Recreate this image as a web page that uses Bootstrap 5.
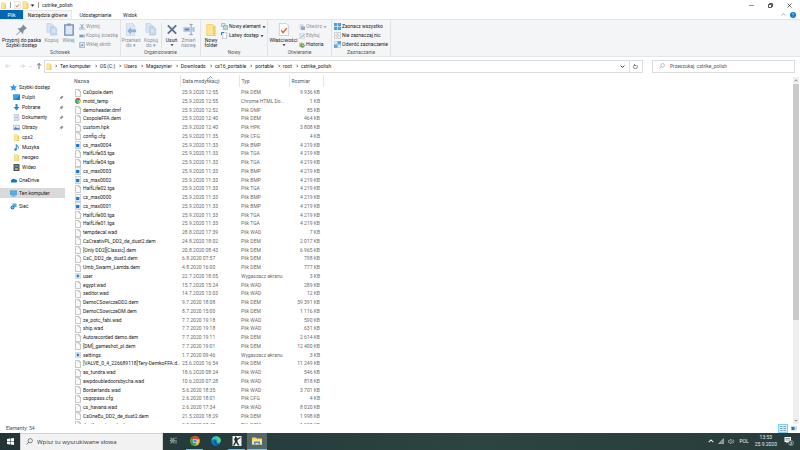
<!DOCTYPE html>
<html lang="pl">
<head>
<meta charset="utf-8">
<meta name="viewport" content="width=device-width, initial-scale=1">
<title>cstrike_polish</title>
<link href="https://cdn.jsdelivr.net/npm/bootstrap@5.3.0/dist/css/bootstrap.min.css" rel="stylesheet">
<style>
  body { font: 5px/1 Roboto, "Open Sans", sans-serif; color: #1a1a1a; background: #fff; }
  button, input { font: inherit; color: inherit; border: 0; padding: 0; background: none; }
  a { color: inherit; text-decoration: none; }
  svg { display: block; flex: none; }
  .i5 { width: 5px; height: 5px; }
  .i6 { width: 6px; height: 6px; }
  .i7 { width: 7px; height: 7px; }
  .file-icon { width: 6px; height: 8px; }
  .i10 { width: 10px; height: 10px; }
  .i12 { width: 12px; height: 13px; }
  .titlebar { height: 10px; padding: 0 8px 0 0; gap: 1px; }
  .window-btns { gap: 14px; }
  .bar-sep { width: 1px; height: 6px; background: #999; margin: 0 2px; }
  .tabs { height: 9px; }
  .tabs a { height: 9px; line-height: 10px; text-align: center; }
  .tabs .file-tab { width: 23px; background: #0067b3; color: #fff; }
  .tabs .home-tab { width: 49px; background: #f5f6f7; border: 1px solid #e6e7e8; border-bottom: 0; line-height: 9px; }
  .tabs .share-tab { width: 47px; }
  .tabs .view-tab { width: 22px; }
  .ribbon { height: 39px; background: #f4f5f7; border-top: 1px solid #e4e5e6; border-bottom: 1px solid #e4e5e6; }
  .group { border-right: 1px solid #e2e3e4; padding-bottom: 1px; }
  .group-label { color: #555; line-height: 6px; text-align: center; }
  .w-clip { width: 121px; } .w-org { width: 80px; } .w-new { width: 67px; } .w-open { width: 64px; } .w-sel { width: 59px; }
  .big { display: flex; flex-direction: column; align-items: center; padding-top: 3px; line-height: 5px; width: 17px; white-space: nowrap; }
  .big svg { margin-bottom: 2px; }
  .big.wide { width: 43px; } .big.mid { width: 20px; } .big.prop { width: 31px; }
  .off { color: #8b919a; }
  .stack { display: flex; flex-direction: column; padding: 2px 0 0 2px; }
  .stack button { display: flex; align-items: center; gap: 1px; height: 9px; white-space: nowrap; }
  .split { width: 1px; height: 26px; margin: 3px 1px 0 0; background: #e0e2e4; }
  .addressbar { height: 18px; padding: 2px 5px 2px 0; gap: 5px; }
  .nav-arrows { width: 39px; padding-left: 5px; color: #555; }
  .path-box, .search-box { border: 1px solid #dcdcdc; height: 13px; }
  .path-box { flex: 1; padding-left: 1px; }
  .crumb { display: flex; align-items: center; }
  .crumb svg { margin: 0 2px 0 3px; color: #444; }
  .crumb svg:first-child { margin-left: 2px; }
  .refresh { width: 13px; border-left: 1px solid #e2e2e2; height: 11px; }
  .search-box { width: 18%; padding-left: 6px; gap: 5px; }
  .search-box input { color: #555; outline: 0; min-width: 0; flex: 1; }
  .search-box input::placeholder, .task-search input::placeholder { color: inherit; opacity: 1; }
  .side { width: 65px; padding-top: 7px; }
  .side a { display: flex; align-items: center; height: 10px; gap: 2px; padding-left: 13px; padding-right: 1px; }
  .side a.root { padding-left: 10px; }
  .side a.gap-before { margin-top: 3px; }
  .side a.current { background: #d9d9d9; }
  .side .pin { margin-left: auto; }
  .files { width: 253px; margin-left: 5px; table-layout: fixed; border-collapse: collapse; line-height: 1.75; }
  .files th { font-weight: 400; color: #45566b; height: 12px; padding: 0 0 1px 2px; border-right: 1px solid #e5e5e5; position: relative; line-height: 10px; }
  .files td { padding: 0 0 0 2px; white-space: nowrap; overflow: hidden; color: #6a6a6a; }
  .files td.size { text-align: right; padding-right: 3px; }
  .files td.label { color: #1a1a1a; padding-left: 5px; }
  .files td.label span { display: flex; gap: 2px; align-items: center; }
  .files .spacer td { height: 1px; line-height: 1px; }
  .sortmark { position: absolute; left: 27px; top: 0; }
  .scroller { width: 6px; margin: 2px 1px 0 0; background: #efefef; color: #555; }
  .scroller .thumb { flex: 0 0 68%; background: #cacaca; }
  .scroller .ends { height: 7px; }
  .status { height: 9px; padding: 0 3px 0 6px; color: #34527a; }
  .status .on { background: #cdeefd; outline: 1px solid #7fd0f5; }
  .taskbar { height: 17px; background: linear-gradient(90deg, #223436, #2c4442 60%, #293c3c); color: #e8ecec; }
  .start { width: 20px; }
  .task-search { width: 143px; background: #f2f2f2; color: #333; font: 6px/1 "Open Sans", sans-serif; gap: 4px; padding-left: 5px; border: 1px solid #cfd3d3; border-bottom: 0; }
  .task-search input { flex: 1; outline: 0; min-width: 0; }
  .apps { padding-left: 2px; }
  .app { width: 17px; margin-right: 4px; height: 17px; border-bottom: 1px solid transparent; display: flex; align-items: center; justify-content: center; }
  .app.open { border-color: #76b9ed; }
  .app.front { background: #56686a; width: 20px; margin-left: -2px; }
  .tray { gap: 4px; padding-right: 6px; }
  .clock { line-height: 7px; text-align: center; margin: 0 3px 0 2px; }
</style>
<script src="https://cdn.jsdelivr.net/npm/bootstrap@5.3.0/dist/js/bootstrap.bundle.min.js"></script>
</head>
<body class="vh-100 d-flex flex-column overflow-hidden">

<svg width="0" height="0" class="position-absolute" aria-hidden="true">
  <symbol id="folder" viewBox="0 0 12 14"><path d="M1 1h7l1 2h2v11H1z" fill="#f6cf62"/><path d="M2 2h6v11H2z" fill="#ffe59a"/></symbol>
  <symbol id="page" viewBox="0 0 11 14"><path d="M1 .5h6l3 3v10H1z" fill="#fafafa" stroke="#999"/><path d="M7 .5v3h3" fill="none" stroke="#999"/></symbol>
  <symbol id="image" viewBox="0 0 11 14"><path d="M.5.500h10v13H.5z" fill="#f7fbff" stroke="#9aa7b5"/><rect x="2" y="5" width="6" height="6" fill="#1c77cf"/></symbol>
  <symbol id="saver" viewBox="0 0 14 12"><path d="M.5.5h13v11H.5z" fill="#eef3f8" stroke="#9aa2aa"/><rect x="4" y="3" width="5" height="6" fill="#1878d8"/><path d="M11 3v6" stroke="#9aa2aa"/></symbol>
  <symbol id="chrome" viewBox="0 0 24 24"><circle cx="12" cy="12" r="11.500" fill="#fbc116"/><path d="M12 12 2 6.200A11.500 11.500 0 0 1 22 6.200z" fill="#e33b2e"/><path d="M12 12 2 6.200A11.500 11.500 0 0 0 11.500 23.500L17 15z" fill="#2da14c"/><circle cx="12" cy="12" r="5.500" fill="#fff"/><circle cx="12" cy="12" r="4.300" fill="#4285f4"/></symbol>
  <symbol id="pin" viewBox="0 0 12 12"><path d="m7 1 4 4-1.500.5-2 2-.5 3L1.500 5l3-.5 2-2z" fill="#7e8d99"/><path d="m4.500 7.500-4 4" stroke="#7e8d99"/></symbol>
  <symbol id="chev" viewBox="0 0 8 8"><path d="m3 1.500 2.500 2.500L3 6.500" fill="none" stroke="currentColor" stroke-width="1.500"/></symbol>
  <symbol id="up" viewBox="0 0 8 8"><path d="m1 5.500 3-3 3 3" fill="none" stroke="currentColor" stroke-width="1.400"/></symbol>
  <symbol id="down" viewBox="0 0 8 8"><path d="m1 2.500 3 3 3-3" fill="none" stroke="currentColor" stroke-width="1.400"/></symbol>
  <symbol id="tri" viewBox="0 0 8 8"><path d="M1 2.500h6L4 6z" fill="currentColor"/></symbol>
  <symbol id="lens" viewBox="0 0 14 14"><circle cx="8.500" cy="5.500" r="4.300" fill="none" stroke="currentColor" stroke-width="1.200"/><path d="M5.500 8.500 1 13" stroke="currentColor" stroke-width="1.400"/></symbol>
  <symbol id="copy" viewBox="0 0 24 28"><path d="M1 1h10l4 4v15H1z" fill="#d5e3f4" stroke="#b3c7e0"/><path d="M9 8h9l4 4v14H9z" fill="#c5d8ee" stroke="#9fb8d7"/><path d="M12 15h7M12 19h7" stroke="#f2f7fc" stroke-width="1.500"/></symbol>
  <symbol id="check" viewBox="0 0 24 28"><path d="M2 1h15l5 5v21H2z" fill="#fff" stroke="#a4a4a4"/><path d="m6 16 4 5 8-10" fill="none" stroke="#e2582a" stroke-width="3"/></symbol>
</svg>

<header>
  <div class="titlebar d-flex align-items-center">
    <svg class="i7"><use href="#folder"/></svg>
    <span class="bar-sep"></span>
    <svg width="7" height="8"><use href="#check"/></svg>
    <svg width="7" height="8"><use href="#folder"/></svg>
    <svg class="i5"><use href="#tri"/></svg>
    <span class="bar-sep"></span>
    <span>cstrike_polish</span>
    <div class="window-btns d-flex align-items-center ms-auto">
      <button aria-label="Minimalizuj"><svg class="i5" viewBox="0 0 10 10"><path d="M0 5h10" stroke="#222"/></svg></button>
      <button aria-label="Przywróć"><svg class="i5" viewBox="0 0 10 10"><path d="M1 3h6v6H1zM3 3V1h6v6H7" fill="none" stroke="#222" stroke-width="1.500"/></svg></button>
      <button aria-label="Zamknij"><svg class="i5" viewBox="0 0 10 10"><path d="m1 1 8 8M9 1 1 9" stroke="#222" stroke-width="1.300"/></svg></button>
    </div>
  </div>
  <nav class="tabs d-flex align-items-center">
    <a href="#" class="file-tab">Plik</a>
    <a href="#" class="home-tab">Narzędzia główne</a>
    <a href="#" class="share-tab">Udostępnianie</a>
    <a href="#" class="view-tab">Widok</a>
    <div class="ms-auto d-flex align-items-center gap-1 pe-1">
      <button aria-label="Zwiń wstążkę"><svg class="i5" color="#999"><use href="#up"/></svg></button>
      <button aria-label="Pomoc"><svg class="i6" viewBox="0 0 12 12"><circle cx="6" cy="6" r="6" fill="#0b78d4"/><path d="M4.500 4.500q0-1.700 1.500-1.700t1.500 1.500Q7.500 5.300 6 6v1.300M6 8.500v1.300" fill="none" stroke="#fff"/></svg></button>
    </div>
  </nav>
</header>

<section class="ribbon d-flex" aria-label="Wstążka">
  <div class="group w-clip d-flex flex-column">
    <div class="d-flex flex-grow-1">
      <button class="big wide"><svg class="i12"><use href="#pin"/></svg>Przypnij do paska<br>Szybki dostęp</button>
      <button class="big off"><svg class="i12"><use href="#copy"/></svg>Kopiuj</button>
      <button class="big off"><svg class="i12" viewBox="0 0 24 28"><path d="M3 4h18v22H3z" fill="#dbe8f7" stroke="#6f8fb8" stroke-width="3"/><path d="M8 1h8v5H8z" fill="#8d9db0"/></svg>Wklej</button>
      <div class="stack off">
        <button><svg class="i6" viewBox="0 0 12 12"><path d="m3 0 5 8M9 0 4 8" stroke="#7f95b5" stroke-width="1.500"/><circle cx="3" cy="9.500" r="2" fill="none" stroke="#6c8ec0"/><circle cx="9" cy="9.500" r="2" fill="none" stroke="#6c8ec0"/></svg>Wytnij</button>
        <button><svg class="i6" viewBox="0 0 12 12"><path d="M0 3h12v6H0z" fill="#a9bfdc"/><path d="M2 6h6" stroke="#4c6e9d" stroke-width="2"/></svg>Kopiuj ścieżkę</button>
        <button><svg class="i6" viewBox="0 0 12 12"><path d="M1.500.5h9v11h-9z" fill="#e4edf8" stroke="#7c99c2" stroke-width="1.500"/><path d="M4 9V6h4M6 4l2 2-2 2" fill="none" stroke="#476fa8"/></svg>Wklej skrót</button>
      </div>
    </div>
    <div class="group-label">Schowek</div>
  </div>
  <div class="group w-org d-flex flex-column">
    <div class="d-flex flex-grow-1">
      <button class="big mid off"><svg class="i12" viewBox="0 0 24 28"><path d="M2 1h14l4 4v22H2z" fill="#dce7f4" stroke="#b9cade"/><path d="M23 14H12v-5l-8 8 8 8v-5h11z" fill="#8fb0db"/></svg>Przenieś<br>do ▾</button>
      <button class="big mid off"><svg class="i12"><use href="#copy"/></svg>Kopiuj<br>do ▾</button>
      <div class="split"></div>
      <button class="big"><svg class="i12" viewBox="0 0 24 28"><path d="m3 5 18 18M21 5 3 23" stroke="#5d7290" stroke-width="4"/></svg>Usuń<svg width="4" height="4"><use href="#tri"/></svg></button>
      <button class="big off"><svg class="i12" viewBox="0 0 24 28"><path d="M0 9h14v10H0zM19 9h5v10h-5z" fill="#a9c0de"/><path d="M3 14h9" stroke="#5a7fb2" stroke-width="3"/><path d="M16.500 4v20M13 3h7M13 25h7" stroke="#7e98bb" stroke-width="2"/></svg>Zmień<br>nazwę</button>
    </div>
    <div class="group-label">Organizowanie</div>
  </div>
  <div class="group w-new d-flex flex-column">
    <div class="d-flex flex-grow-1">
      <button class="big mid"><svg class="i12"><use href="#folder"/></svg>Nowy<br>folder</button>
      <div class="stack ps-0">
        <button><svg class="i7" viewBox="0 0 14 14"><path d="M1 1h7v6H1z" fill="#dcebf8" stroke="#6b93b5"/><path d="M5 5h8v8H5z" fill="#b7dbc9" stroke="#6b93b5"/></svg>Nowy element<svg width="4" height="4"><use href="#tri"/></svg></button>
        <button><svg class="i7" viewBox="0 0 14 14"><path d="M3.500 1.500h8v12h-8z" fill="#fff" stroke="#8796a8"/><path d="M1 6V1h5" fill="none" stroke="#3979c4" stroke-width="2"/></svg>Łatwy dostęp<svg width="4" height="4"><use href="#tri"/></svg></button>
      </div>
    </div>
    <div class="group-label">Nowy</div>
  </div>
  <div class="group w-open d-flex flex-column">
    <div class="d-flex flex-grow-1">
      <button class="big prop"><svg class="i12"><use href="#check"/></svg>Właściwości<svg width="4" height="4"><use href="#tri"/></svg></button>
      <div class="stack ps-0">
        <button class="off"><svg class="i6" viewBox="0 0 12 12"><path d="M1 0h8v11H1z" fill="#cddbea"/><path d="M4 5h8v7H4z" fill="#8eabd0"/></svg>Otwórz<svg width="4" height="4"><use href="#tri"/></svg></button>
        <button class="off"><svg class="i6" viewBox="0 0 12 12"><path d="M1.500.5h9v11h-9z" fill="#e9f0f8" stroke="#a7bdd8"/><path d="m4 9 6-6" stroke="#7096c8" stroke-width="2"/></svg>Edytuj</button>
        <button><svg class="i6" viewBox="0 0 12 12"><path d="M0 1h7v9H0z" fill="#edc850"/><circle cx="7" cy="7" r="4.500" fill="#4ca25e"/><path d="M7 4v3h3" stroke="#fff" fill="none"/></svg>Historia</button>
      </div>
    </div>
    <div class="group-label">Otwieranie</div>
  </div>
  <div class="group w-sel d-flex flex-column">
    <div class="stack flex-grow-1">
      <button><svg class="i7" viewBox="0 0 14 14"><path d="M0 0h14v14H0z" fill="#4a9ee0"/><path d="M7 0v14M0 7h14" stroke="#d7ecfb" stroke-width="1.500"/></svg>Zaznacz wszystko</button>
      <button><svg class="i7" viewBox="0 0 14 14"><path d="M1 1h5v5H1zM8 1h5v5H8zM1 8h5v5H1zM8 8h5v5H8z" fill="#fff" stroke="#a8adb3"/></svg>Nie zaznaczaj nic</button>
      <button><svg class="i7" viewBox="0 0 14 14"><path d="M1 1h5v5H1zM8 8h5v5H8z" fill="#fff" stroke="#8fb3d6"/><path d="M7 0h7v7H7zM0 7h7v7H0z" fill="#58a9e6"/></svg>Odwróć zaznaczenie</button>
    </div>
    <div class="group-label">Zaznaczanie</div>
  </div>
</section>

<div class="addressbar d-flex align-items-center">
  <div class="nav-arrows d-flex align-items-center gap-1">
    <button aria-label="Wstecz"><svg class="i6" viewBox="0 0 12 12"><path d="M11 6H1m4-4L1 6l4 4" fill="none" stroke="#c3c3c3" stroke-width="1.300"/></svg></button>
    <button aria-label="Dalej" class="ms-1"><svg class="i6" viewBox="0 0 12 12"><path d="M1 6h10M7 2l4 4-4 4" fill="none" stroke="#c3c3c3" stroke-width="1.300"/></svg></button>
    <button aria-label="Ostatnie lokalizacje"><svg width="3" height="3" color="#aaa"><use href="#down"/></svg></button>
    <button aria-label="W górę"><svg class="i6" viewBox="0 0 12 12"><path d="M6 12V1M2 5l4-4 4 4" fill="none" stroke="#444" stroke-width="1.500"/></svg></button>
  </div>
  <nav class="path-box d-flex align-items-center" aria-label="Ścieżka">
    <svg width="6" height="7"><use href="#folder"/></svg>
    <div class="crumb" id="crumbs"></div>
    <button class="ms-auto me-1" aria-label="Historia adresów"><svg class="i5"><use href="#down"/></svg></button>
    <button class="refresh d-flex align-items-center justify-content-center" aria-label="Odśwież"><svg class="i5" viewBox="0 0 10 10"><path d="M3 2a4 4 0 1 0 4 0M3 0v3h3" fill="none" stroke="#444" stroke-width="1.300"/></svg></button>
  </nav>
  <div class="search-box d-flex align-items-center ms-1">
    <svg class="i6" color="#888"><use href="#lens"/></svg>
    <input type="search" aria-label="Przeszukaj" placeholder="Przeszukaj: cstrike_polish">
  </div>
</div>

<main class="d-flex flex-grow-1 overflow-hidden">
  <nav class="side flex-shrink-0" aria-label="Okienko nawigacji">
    <a href="#" class="root"><svg class="i7" viewBox="0 0 12 12"><path d="m6 0 1.800 3.800 4.200.5-3 3 .8 4.400L6 9.500l-3.800 2.200.8-4.400-3-3 4.200-.5z" fill="#2f97e0"/></svg>Szybki dostęp</a>
    <a href="#"><svg class="i7" viewBox="0 0 14 12"><path d="M0 0h14v11H0z" fill="#1686dd"/><path d="M0 0h14L3 11H0z" fill="#3aa5f0"/></svg>Pulpit<svg class="i5 pin"><use href="#pin"/></svg></a>
    <a href="#"><svg class="i7" viewBox="0 0 14 14"><path d="M5 0h4v6h4l-6 7-6-7h4z" fill="#2f86d3"/></svg>Pobrane<svg class="i5 pin"><use href="#pin"/></svg></a>
    <a href="#"><svg class="i7" viewBox="0 0 14 14"><path d="M2.500.5h9v13h-9z" fill="#f3f8fc" stroke="#8ba2b5"/><path d="M4 4h6M4 7h6M4 10h6" stroke="#5b9bd0"/></svg>Dokumenty<svg class="i5 pin"><use href="#pin"/></svg></a>
    <a href="#"><svg class="i7" viewBox="0 0 14 14"><path d="M.5 2.500h13v9H.5z" fill="#d7eafa" stroke="#8ba2b5"/><path d="m1 11 4-5 4 3 4-1v3z" fill="#3b78b5"/></svg>Obrazy<svg class="i5 pin"><use href="#pin"/></svg></a>
    <a href="#"><svg class="i7"><use href="#folder"/></svg>cps2</a>
    <a href="#"><svg class="i7" viewBox="0 0 14 14"><circle cx="5" cy="11" r="2.500" fill="#1e86d8"/><path d="M6.500 11V1q1 3 4 4.500 1 2-.5 4" fill="none" stroke="#1e86d8" stroke-width="2"/></svg>Muzyka</a>
    <a href="#"><svg class="i7"><use href="#folder"/></svg>neogeo</a>
    <a href="#"><svg class="i7" viewBox="0 0 14 14"><path d="M1 0h12v14H1z" fill="#4b4f57"/><path d="M4 2h6v4H4z" fill="#4c93dc"/><path d="M4 8h6v4H4z" fill="#c3a34c"/><path d="M2.500 1v12M11.500 1v12" stroke="#ddd" stroke-dasharray="1 2"/></svg>Wideo</a>
    <a href="#" class="root gap-before"><svg class="i7" viewBox="0 0 14 14"><path d="M3 11a3 3 0 0 1 0-5 4 4 0 0 1 7-1 3 3 0 0 1 2 6z" fill="#0f75c9"/></svg>OneDrive</a>
    <a href="#" class="root gap-before current"><svg class="i7" viewBox="0 0 14 14"><path d="M.5 1.500h13v8H.5z" fill="#45b1ef" stroke="#4386b5"/><path d="M3 12h8" stroke="#6a7f90" stroke-width="1.500"/></svg>Ten komputer</a>
    <a href="#" class="root gap-before"><svg class="i7" viewBox="0 0 14 14"><path d="M5 1h8v7H5z" fill="#4fb1e8"/><circle cx="5" cy="9" r="4" fill="#2476b8"/><path d="M1 9h8M5 5v8" stroke="#8fd0f4"/></svg>Sieć</a>
  </nav>
  <div class="flex-grow-1 overflow-hidden">
    <table class="files">
      <colgroup><col width="110"><col width="59"><col width="50"><col width="34"></colgroup>
      <thead><tr><th scope="col" class="ps-1">Nazwa</th><th scope="col">Data modyfikacji<svg class="i5 sortmark" color="#777"><use href="#up"/></svg></th><th scope="col">Typ</th><th scope="col">Rozmiar</th></tr></thead>
      <tbody id="rows"><tr class="spacer"><td colspan="4"></td></tr></tbody>
    </table>
  </div>
  <div class="scroller d-flex flex-column align-items-center">
    <svg class="ends" width="4"><use href="#up"/></svg>
    <div class="thumb w-100"></div>
    <svg class="ends mt-auto" width="4"><use href="#down"/></svg>
  </div>
</main>

<footer>
  <div class="status d-flex align-items-center">
    <span>Elementy: 54</span>
    <button class="on ms-auto me-1" aria-label="Szczegóły"><svg width="8" height="7" viewBox="0 0 16 14"><path d="M2 3h5M2 7h5M2 11h5M9 3h5M9 7h5M9 11h5" stroke="#7090a8" stroke-width="1.500"/></svg></button>
    <button aria-label="Duże ikony"><svg width="6" height="5" viewBox="0 0 12 10"><path d="M0 0h12v9H0z" fill="#c7dff5"/><path d="M1 2h6v6H1z" fill="#2e6fae"/></svg></button>
  </div>
  <div class="taskbar d-flex align-items-stretch">
    <button class="start d-flex align-items-center justify-content-center" aria-label="Start"><svg class="i7" viewBox="0 0 14 14"><path d="m0 2 6-.8v5.500H0zm7-1L14 0v6.700H7zM0 7.500h6V13l-6-.8zm7 0h7V14l-7-1z" fill="#fff"/></svg></button>
    <div class="task-search d-flex align-items-center"><svg class="i7"><use href="#lens"/></svg><input type="search" aria-label="Wyszukiwanie" placeholder="Wpisz tu wyszukiwane słowa"></div>
    <div class="apps d-flex">
      <button class="app me-0" aria-label="Widok zadań"><svg class="i7" viewBox="0 0 14 14"><path d="M2 1v3h6V1M2 13v-3h6v3M1 6h8v2H1zM12 1v3M12 6v7" fill="none" stroke="#d5dcdc" stroke-width="1.200"/></svg></button>
      <button class="app open ms-1" aria-label="Chrome"><svg class="i10"><use href="#chrome"/></svg></button>
      <button class="app" aria-label="Edge"><svg class="i10" viewBox="0 0 24 24"><circle cx="12" cy="12" r="11.500" fill="#1574c4"/><path d="M1 11C3-2 22-3 23.500 11q0 6-7 5.500-3-.5-2-3Q14 8 9 8 4 8 1 11z" fill="#35c6c0"/><path d="M12 1q11 1 11.500 10 0 6-7 5.500 3-9-4.500-15.500z" fill="#55d36b"/><path d="M9 11q-3 7 4 10 5 1 8-2-5 1-8-1-3-3-1-6-1-2-3-1z" fill="#0c4b8c"/></svg></button>
      <button class="app open" aria-label="Counter-Strike"><svg class="i10" viewBox="0 0 20 20"><path d="M1 0h18v20H1z" fill="#eef1f1"/><path d="m6 1 3 1 1 3 7-3v2l-6 4v4l4 7h-3l-4-6-3 6H2l4-8-2-5 2-2z" fill="#222b2c"/></svg></button>
      <button class="app open front" aria-label="Eksplorator plików"><svg class="i10" viewBox="0 0 20 20"><path d="M0 3h8l2 2h10v12H0z" fill="#f8cf5c"/><path d="M0 7h20v10H0z" fill="#ffe08a"/><path d="M4 17v-6h12v6h-3v-3H7v3z" fill="#3c94dd"/></svg></button>
    </div>
    <div class="tray d-flex align-items-center ms-auto">
      <svg class="i6"><use href="#up"/></svg>
      <svg class="i6" viewBox="0 0 12 12"><path d="M11.500 1v10.500H1z" fill="#82908f" stroke="#dfe5e5"/></svg>
      <svg class="i7" viewBox="0 0 14 14"><path d="M1 5h2l3-3v10L3 9H1zM8 5q2 2 0 4M10 3q3.500 4 0 8" fill="none" stroke="#dfe5e5"/></svg>
      <span>POL</span>
      <div class="clock">13:53<br>25.9.2020</div>
      <svg class="i10" viewBox="0 0 20 20"><path d="M1 2h13v10H8l-3 3v-3H1z" fill="#f3f6f6"/><path d="M3 5h9M3 8h9" stroke="#435"/><circle cx="14" cy="14" r="5" fill="#36484a" stroke="#bcc8c8"/><path d="M12.500 12.500q1.500-1.500 3 0t-3 4h3.500" fill="none" stroke="#fff"/></svg>
    </div>
  </div>
</footer>

<script>
  const crumbs = ["Ten komputer", "OS (C:)", "Users", "Magazynier", "Downloads", "cs16_portable", "portable", "root", "cstrike_polish"];
  document.getElementById("crumbs").innerHTML = crumbs.map(c =>
    `<svg width="4" height="4"><use href="#chev"/></svg><a href="#">${c}</a>`).join("");

  const rows = `CsOpole.dem|25.9.2020 12:55|Plik DEM|9 936
motd_temp|25.9.2020 12:55|Chrome HTML Do...|1|chrome
demoheader.dmf|25.9.2020 12:52|Plik DMF|85
CsopoleFFA.dem|25.9.2020 12:40|Plik DEM|464
custom.hpk|25.9.2020 12:40|Plik HPK|3 808
config.cfg|25.9.2020 11:35|Plik CFG|4
cs_max0004|25.9.2020 11:33|Plik BMP|4 219|image
HalfLife03.tga|25.9.2020 11:33|Plik TGA|4 219
HalfLife04.tga|25.9.2020 11:33|Plik TGA|4 219
cs_max0003|25.9.2020 11:33|Plik BMP|4 219|image
cs_max0002|25.9.2020 11:33|Plik BMP|4 219|image
HalfLife02.tga|25.9.2020 11:33|Plik TGA|4 219
cs_max0000|25.9.2020 11:33|Plik BMP|4 219|image
cs_max0001|25.9.2020 11:33|Plik BMP|4 219|image
HalfLife00.tga|25.9.2020 11:33|Plik TGA|4 219
HalfLife01.tga|25.9.2020 11:33|Plik TGA|4 219
tempdecal.wad|28.8.2020 17:39|Plik WAD|7
CsCreativPL_DD2_de_dust2.dem|24.8.2020 18:02|Plik DEM|2 017
[Only DD2][Classic].dem|20.8.2020 08:43|Plik DEM|6 965
CsC_DD2_de_dust2.dem|6.8.2020 07:57|Plik DEM|798
Umb_Swarm_Lamda.dem|4.8.2020 16:00|Plik DEM|777
user|22.7.2020 18:05|Wygaszacz ekranu|3|saver
egypt.wad|15.7.2020 15:24|Plik WAD|289
zeditor.wad|14.7.2020 13:03|Plik WAD|12
DemoCSowiczeDD2.dem|9.7.2020 18:08|Plik DEM|39 391
DemoCSowiczeDM.dem|8.7.2020 15:00|Plik DEM|1 116
ze_potc_fabi.wad|7.7.2020 19:18|Plik WAD|590
ship.wad|7.7.2020 19:18|Plik WAD|631
Autorecorded demo.dem|7.7.2020 19:11|Plik DEM|2 614
[DM]_gameshot_pl.dem|7.7.2020 19:01|Plik DEM|12 400
settings|1.7.2020 09:46|Wygaszacz ekranu|3|saver
[VALVE_0_4_226689118]Tery-DemkoFFA.d...|23.6.2020 16:54|Plik DEM|11 249
as_tundra.wad|18.6.2020 08:24|Plik WAD|546
awpdoubledoorsbycha.wad|10.6.2020 07:28|Plik WAD|818
Borderlands.wad|5.6.2020 18:35|Plik WAD|3 701
csgopass.cfg|2.6.2020 18:01|Plik CFG|4
cs_havana.wad|2.6.2020 17:34|Plik WAD|8 020
CsOneEu_DD2_de_dust2.dem|21.5.2020 18:29|Plik DEM|1 998
deathrun_temple.dem|2.5.2020 17:40|Plik DEM|1 998`.split("\n").map(r => r.split("|"));
  document.getElementById("rows").insertAdjacentHTML("beforeend", rows.map(([n, d, t, s, ic]) =>
    `<tr><td class="label"><span><svg class="file-icon"><use href="#${ic || "page"}"/></svg>${n}</span></td><td>${d}</td><td>${t}</td><td class="size">${s} KB</td></tr>`).join(""));
</script>
</body>
</html>
